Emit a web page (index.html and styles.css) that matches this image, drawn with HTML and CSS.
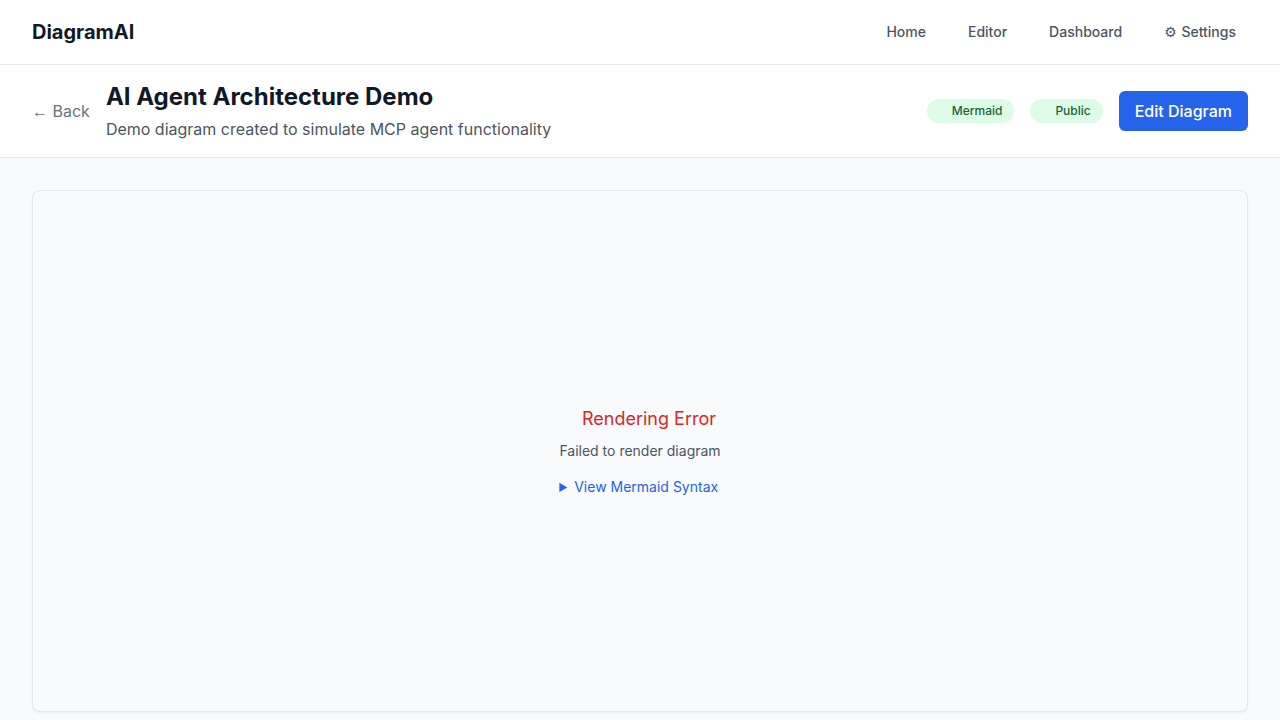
FILE: index.html
```html
<!DOCTYPE html>
<html lang="en">
<head>
<meta charset="utf-8">
<meta name="viewport" content="width=device-width, initial-scale=1">
<title>DiagramAI</title>
<link rel="stylesheet" href="styles.css">
</head>
<body>
<nav class="navbar">
  <a class="brand" href="#">DiagramAI</a>
  <div class="nav-links">
    <a class="nav-link" href="#">Home</a>
    <a class="nav-link" href="#">Editor</a>
    <a class="nav-link" href="#">Dashboard</a>
    <a class="nav-link" href="#"><span class="gear">⚙</span> Settings</a>
  </div>
</nav>
<header class="page-header">
  <div class="heading">
    <a class="back" href="#"><span class="arrow">←</span> Back</a>
    <div>
      <h1 class="title">AI Agent Architecture Demo</h1>
      <p class="subtitle">Demo diagram created to simulate MCP agent functionality</p>
    </div>
  </div>
  <div class="actions">
    <span class="badge">Mermaid</span>
    <span class="badge">Public</span>
    <button class="edit" type="button">Edit Diagram</button>
  </div>
</header>
<main class="content">
  <section class="viewer">
    <div class="error">
      <div class="error-title">Rendering Error</div>
      <div class="error-text">Failed to render diagram</div>
      <details class="syntax">
        <summary>View Mermaid Syntax</summary>
      </details>
    </div>
  </section>
</main>
</body>
</html>
```
FILE: styles.css
```css
* { box-sizing: border-box; margin: 0; }
body {
  min-height: 100vh;
  background: #f9fafb;
  color: #111827;
  font-family: Inter, "Liberation Sans", sans-serif;
  font-size: 16px;
  line-height: 24px;
}
a { color: inherit; text-decoration: none; }
.navbar {
  display: flex;
  align-items: center;
  justify-content: space-between;
  padding: 14px 32px;
  background: #fff;
  border-bottom: 1px solid #e5e7eb;
}
.brand { font-size: 20px; line-height: 28px; font-weight: 700; }
.nav-links { display: flex; gap: 18px; }
.nav-link {
  padding: 8px 12px;
  color: #4b5563;
  font-size: 14px;
  line-height: 20px;
  font-weight: 500;
}
.gear { margin-right: 1px; font-family: "DejaVu Sans", sans-serif; font-weight: 400; line-height: 1; }
.arrow { font-family: "Liberation Sans", sans-serif; line-height: 1; }
.page-header {
  display: flex;
  align-items: center;
  justify-content: space-between;
  padding: 16px 32px;
  background: #fff;
  border-bottom: 1px solid #e5e7eb;
}
.heading, .actions { display: flex; align-items: center; gap: 16px; }
.back { color: #6b7280; }
.title { font-size: 24px; line-height: 32px; font-weight: 700; }
.subtitle { margin-top: 4px; color: #4b5563; }
.badge {
  padding: 4px 12px 4px 25px;
  border-radius: 12px;
  background: #dcfce7;
  color: #166534;
  font-size: 12px;
  line-height: 16px;
  font-weight: 500;
}
.edit {
  padding: 8px 16px;
  border: 0;
  border-radius: 6px;
  background: #2563eb;
  color: #fff;
  font: inherit;
  font-weight: 500;
}
.content { padding: 32px; }
.viewer {
  display: flex;
  align-items: center;
  justify-content: center;
  min-height: 522px;
  border: 1px solid #e5e7eb;
  border-radius: 8px;
  background: #f9fafb;
  box-shadow: 0 1px 2px rgba(0, 0, 0, 0.05);
}
.error { text-align: center; }
.error-title { padding-left: 18px; color: #dc2626; font-size: 18px; line-height: 28px; }
.error-text { margin-top: 8px; color: #4b5563; font-size: 14px; line-height: 20px; }
.syntax { margin-top: 16px; font-size: 14px; line-height: 20px; text-align: left; }
.syntax summary { color: #2563eb; cursor: pointer; }
```
